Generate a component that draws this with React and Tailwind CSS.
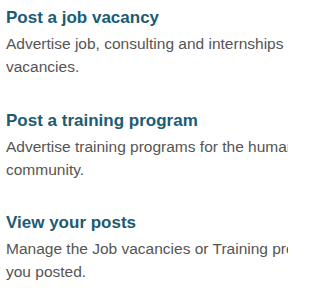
const ITEMS = [
  { title: 'Post a job vacancy', text: 'Advertise job, consulting and internships vacancies.' },
  { title: 'Post a training program', text: 'Advertise training programs for the humanitarian community.' },
  { title: 'View your posts', text: 'Manage the Job vacancies or Training programs you posted.' },
];

export default function App() {
  return (
    <div className="w-[288px] h-[288px] overflow-hidden bg-white" style={{ fontFamily: '"Liberation Sans", Arial, sans-serif' }}>
      <div className="w-[342px] pl-[6px] pt-[6px] flex flex-col gap-[30.5px]">
        {ITEMS.map(it => (
          <div key={it.title}>
            <h2 className="text-[17px] leading-[24px] font-bold text-[#1b5c74]">{it.title}</h2>
            <p className="mt-[2px] text-[15.5px] leading-[23px] text-[#555555]">{it.text}</p>
          </div>
        ))}
      </div>
    </div>
  );
}
